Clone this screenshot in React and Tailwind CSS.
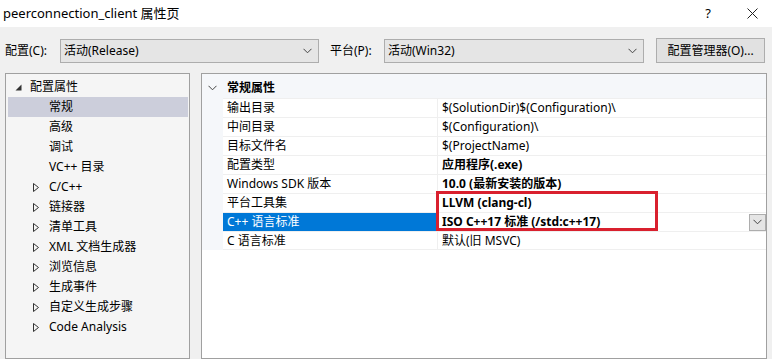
import React from 'react';

const font = { fontFamily: '"Noto Sans", "Noto Sans CJK SC", sans-serif' };

const Chevron = ({ className = '' }) => (
  <svg className={className} width="9" height="6" viewBox="0 0 9 6" fill="none">
    <polyline points="0.5,0.8 4.5,4.8 8.5,0.8" stroke="#444" strokeWidth="1" />
  </svg>
);

const Expanded = () => (
  <svg width="7" height="7" viewBox="0 0 7 7" className="shrink-0">
    <polygon points="6.5,0.5 6.5,6.5 0.5,6.5" fill="#333" />
  </svg>
);

const Collapsed = () => (
  <svg width="6" height="9" viewBox="0 0 6 9" className="shrink-0">
    <polygon points="0.5,0.5 5.5,4.5 0.5,8.5" fill="none" stroke="#333" strokeWidth="1" />
  </svg>
);

const tree = [
  { label: '常规', selected: true },
  { label: '高级' },
  { label: '调试' },
  { label: 'VC++ 目录' },
  { label: 'C/C++', collapsed: true },
  { label: '链接器', collapsed: true },
  { label: '清单工具', collapsed: true },
  { label: 'XML 文档生成器', collapsed: true },
  { label: '浏览信息', collapsed: true },
  { label: '生成事件', collapsed: true },
  { label: '自定义生成步骤', collapsed: true },
  { label: 'Code Analysis', collapsed: true },
];

const props = [
  { name: '输出目录', value: '$(SolutionDir)$(Configuration)\\' },
  { name: '中间目录', value: '$(Configuration)\\' },
  { name: '目标文件名', value: '$(ProjectName)' },
  { name: '配置类型', value: '应用程序(.exe)', bold: true },
  { name: 'Windows SDK 版本', value: '10.0 (最新安装的版本)', bold: true },
  { name: '平台工具集', value: 'LLVM (clang-cl)', bold: true },
  { name: 'C++ 语言标准', value: 'ISO C++17 标准 (/std:c++17)', bold: true, selected: true },
  { name: 'C 语言标准', value: '默认(旧 MSVC)' },
];

const Select = ({ value, width }) => (
  <div className={`${width} h-[24px] flex items-center justify-between bg-[#e5e5e5] border border-[#adadad] pl-[3px] pr-[6px]`}>
    <span>{value}</span>
    <Chevron />
  </div>
);

export default function App() {
  return (
    <div className="w-[772px] h-[359px] overflow-hidden bg-[#f0f0f0] flex flex-col text-[12px] text-black" style={font}>
      <div className="h-[27px] bg-white flex items-center pl-[3px] pr-[14px] shrink-0">
        <span className="text-[13px]">peerconnection_client 属性页</span>
        <span className="ml-auto text-[13px] mr-[36px]">?</span>
        <svg width="11" height="11" viewBox="0 0 11 11">
          <path d="M0.5 0.5 L10.5 10.5 M10.5 0.5 L0.5 10.5" stroke="#222" strokeWidth="1" />
        </svg>
      </div>

      <div className="h-[46px] shrink-0 flex items-start pt-[12px] pl-[5px]">
        <span className="w-[55px] leading-[24px]">配置(C):</span>
        <Select value="活动(Release)" width="w-[259px]" />
        <span className="ml-[11px] w-[54px] leading-[24px]">平台(P):</span>
        <Select value="活动(Win32)" width="w-[260px]" />
        <button className="ml-[12px] -mt-[1px] w-[109px] h-[25px] bg-[#e1e1e1] border border-[#adadad] flex items-center justify-center">
          配置管理器(O)...
        </button>
      </div>

      <div className="flex-1 flex gap-[11px] px-[5px] min-h-0">
        <div className="w-[185px] border border-[#a0a0a0] bg-[#f5f5f5] pt-[3px]">
          <div className="h-[20px] flex items-center pl-[9px] gap-[8px]">
            <Expanded />
            <span>配置属性</span>
          </div>
          {tree.map((item) => (
            <div
              key={item.label}
              className={`h-[20px] flex items-center ml-[2px] mr-[1px] ${item.selected ? 'bg-[#cccedb]' : ''}`}
            >
              <span className="w-[41px] flex justify-end pr-[10px] shrink-0">
                {item.collapsed && <Collapsed />}
              </span>
              <span className="whitespace-nowrap">{item.label}</span>
            </div>
          ))}
        </div>

        <div className="flex-1 border border-[#a0a0a0] bg-white relative">
          <div className="h-[24px] flex items-center bg-[#f5f7fa] pt-[4px]">
            <span className="w-[21px] flex justify-center shrink-0">
              <Chevron />
            </span>
            <span className="pl-[4px] font-semibold">常规属性</span>
          </div>
          {props.map((p, i) => (
            <div key={p.name} className="h-[19px] flex">
              <div className="w-[21px] bg-[#f5f7fa] shrink-0" />
              <div
                className={`w-[214px] shrink-0 flex items-center pl-[4px] border-t border-[#efefef] ${
                  i === props.length - 1 ? 'border-b' : ''
                } ${p.selected ? 'bg-[#0078d7] text-white border-[#0078d7]' : ''}`}
              >
                <span className="whitespace-nowrap">{p.name}</span>
              </div>
              <div
                className={`flex-1 flex items-center pl-[4px] border-t border-l border-[#efefef] ${
                  i === props.length - 1 ? 'border-b' : ''
                } ${p.bold ? 'font-bold' : ''}`}
              >
                <span className="whitespace-nowrap">{p.value}</span>
                {p.selected && (
                  <span className="ml-auto w-[17px] h-[17px] bg-[#e5e5e5] border border-[#adadad] flex items-center justify-center">
                    <Chevron />
                  </span>
                )}
              </div>
            </div>
          ))}
          <div className="absolute left-[234px] top-[117px] w-[222px] h-[40px] border-[3px] border-[#d9202e]" />
        </div>
      </div>
    </div>
  );
}
